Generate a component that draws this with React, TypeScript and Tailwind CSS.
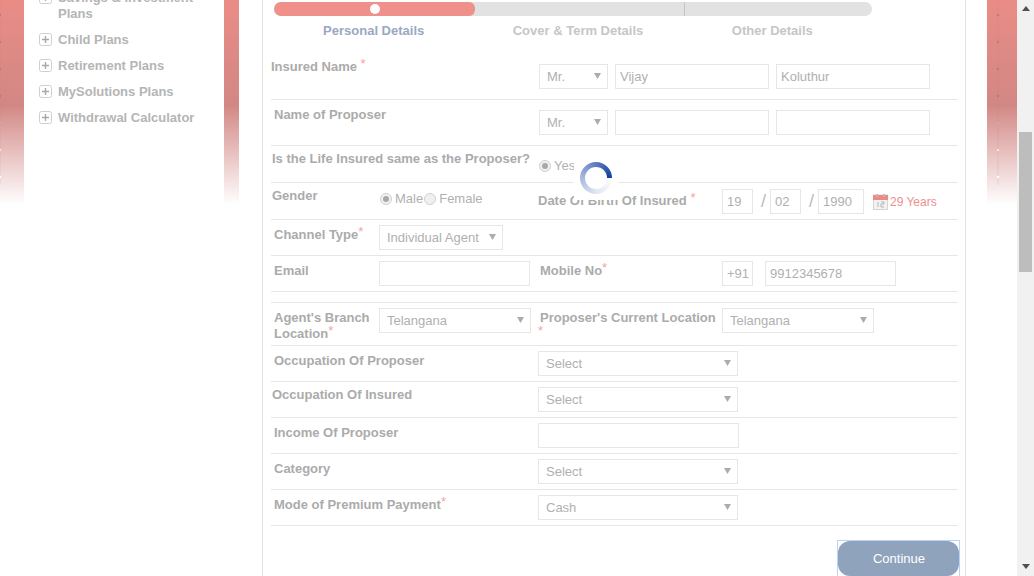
import type { ReactNode } from 'react';

const pink = 'bg-[linear-gradient(#ea8c86_0px,#d28784_105px,#fff_205px)]';
const grid = 'grid grid-cols-[108px_159px_184px_1fr] border-b border-[#e6e6e6] text-[13px]';
const field = 'h-[25px] border border-[#e6e6e6] bg-white px-1 text-[13px] text-[#b0b0b0] outline-none';

const dots = [15, 42, 69, 96, 123, 150, 177];
const dotColors = ['#b07f7c', '#b07f7c', '#ae7f7c', '#ae7f7c', '#cfa9a6', '#f5e4e3', '#ffffff'];

function StripDots({ x }: { x: number }) {
    return (
        <svg className="absolute left-0 top-0" width="30" height="205">
            <line x1={x} y1="0" x2={x} y2="185" stroke="#b98583" strokeOpacity="0.2" />
            {dots.map((y, i) => (
                <circle key={y} cx={x} cy={y} r="1.2" fill={dotColors[i]} />
            ))}
        </svg>
    );
}

function Star() {
    return <span className="relative -top-[3px] inline-block h-3 text-[13px] leading-3 font-normal text-[#f5a3a3]">*</span>;
}

function Label({ children, className = '' }: { children: ReactNode; className?: string }) {
    return <div className={'font-bold leading-4 text-[#ababab] ' + className}>{children}</div>;
}

function Select({ value, className = '' }: { value: string; className?: string }) {
    return (
        <div className={'relative ' + className}>
            <select
                defaultValue={value}
                className="h-[25px] w-full appearance-none border border-[#e6e6e6] bg-white pl-[7px] text-[13px] text-[#b0b0b0] outline-none"
            >
                <option>{value}</option>
            </select>
            <svg className="absolute right-[7px] top-[9px]" width="7" height="6" viewBox="0 0 7 6">
                <path d="M0 0h7L3.5 6z" fill="#acacac" />
            </svg>
        </div>
    );
}

function Radio({ checked, label }: { checked?: boolean; label: string }) {
    return (
        <span className="flex items-center gap-[3px] text-[13px] text-[#b0b0b0]">
            <span className="flex h-3 w-3 items-center justify-center rounded-full border border-[#d0d0d0] bg-[#f0f0f0]">
                {checked && <span className="h-1.5 w-1.5 rounded-full bg-[#a8a8a8]" />}
            </span>
            {label}
        </span>
    );
}

function Plus() {
    return (
        <svg width="13" height="13" viewBox="0 0 13 13" className="shrink-0">
            <rect x="0.5" y="0.5" width="12" height="12" rx="2" fill="#fff" stroke="#cfcfcf" />
            <path d="M3 6.5h7M6.5 3v7" stroke="#a8a8a8" strokeWidth="1.4" />
        </svg>
    );
}

function MenuItem({ children }: { children: ReactNode }) {
    return (
        <div className="flex items-start gap-[6px] pl-[15px] text-[13px] leading-4 font-bold text-[#b5b5b5]">
            <span className="pt-[2px]"><Plus /></span>
            <span className="mt-px">{children}</span>
        </div>
    );
}

function Calendar() {
    return (
        <svg width="15" height="16" viewBox="0 0 15 16" className="shrink-0">
            <rect x="0.5" y="1" width="14" height="14.5" fill="#f2f2f2" stroke="#d5d5d5" />
            <rect x="0" y="1" width="15" height="5" fill="#ee8a86" />
            <rect x="3" y="0" width="2" height="3" fill="#bbb" />
            <rect x="10" y="0" width="2" height="3" fill="#bbb" />
            <path d="M5 8v5M8 8h3v2H8v3h3" stroke="#b5b5b5" fill="none" />
        </svg>
    );
}

export default function App() {
    return (
        <div className="flex h-[576px] w-[1034px] overflow-hidden bg-white font-['Liberation_Sans',Arial,sans-serif]">
            {/* left strip + menu */}
            <div className={'relative h-full w-[239px] shrink-0 pl-6 pr-[15px] ' + pink}>
                <StripDots x={0} />
                <div className="relative flex h-full w-[200px] flex-col gap-[9px] bg-white pt-0">
                    <div className="-mt-[11px]">
                        <MenuItem>Savings &amp; Investment<br />Plans</MenuItem>
                    </div>
                    <MenuItem>Child Plans</MenuItem>
                    <MenuItem>Retirement Plans</MenuItem>
                    <MenuItem>MySolutions Plans</MenuItem>
                    <MenuItem>Withdrawal Calculator</MenuItem>
                </div>
            </div>

            <div className="w-[23px] shrink-0" />

            {/* main form */}
            <div className="relative h-full w-[704px] shrink-0 overflow-hidden border-x border-[#e3e3e3] pl-2 pr-[7px] pt-0.5">
                <div className="ml-[3px] flex h-3.5 w-[598px] overflow-hidden rounded-[7px] bg-[#e2e2e2]">
                    <div className="flex h-full w-[201px] items-center justify-center rounded-r-[6px] bg-[#ef908b]">
                        <span className="h-[10px] w-[10px] rounded-full bg-white" />
                    </div>
                    <div className="ml-[209px] h-full w-px bg-[#c4c4c4]" />
                </div>
                <div className="ml-[3px] mt-[7px] mb-[15px] grid w-[598px] grid-cols-3 text-center text-[13px] leading-4 font-bold text-[#c6c6c6]">
                    <span className="text-[#9aa8c2]">Personal Details</span>
                    <span className="pl-[10px]">Cover &amp; Term Details</span>
                    <span>Other Details</span>
                </div>

                <div className={grid + ' h-[46px]'}>
                    <Label className="col-span-2 pt-[5px]">Insured Name <Star /></Label>
                    <div className="col-span-2 flex gap-[7px] pl-px pt-2.5">
                        <Select value="Mr." className="w-[69px]" />
                        <input className={field + ' w-[154px]'} defaultValue="Vijay" />
                        <input className={field + ' w-[154px]'} defaultValue="Koluthur" />
                    </div>
                </div>
                <div className={grid + ' h-[46px]'}>
                    <Label className="col-span-2 pl-[3px] pt-[7px]">Name of Proposer</Label>
                    <div className="col-span-2 flex gap-[7px] pl-px pt-2.5">
                        <Select value="Mr." className="w-[69px]" />
                        <input className={field + ' w-[154px]'} />
                        <input className={field + ' w-[154px]'} />
                    </div>
                </div>
                <div className={grid + ' h-[37px]'}>
                    <Label className="col-span-2 pl-px pt-[5px]">Is the Life Insured same as the Proposer?</Label>
                    <div className="col-span-2 pl-px pt-2.5"><Radio checked label="Yes" /></div>
                </div>
                <div className={grid + ' h-[37px]'}>
                    <Label className="pl-px pt-[5px]">Gender</Label>
                    <div className="flex items-start gap-px pl-px pt-1.5">
                        <Radio checked label="Male" />
                        <Radio label="Female" />
                    </div>
                    <Label className="pt-2.5">Date Of Birth Of Insured <Star /></Label>
                    <div className="flex items-start pt-1.5 text-[#bcbcbc]">
                        <input className={field + ' w-[31px]'} defaultValue="19" />
                        <span className="w-[17px] pl-1 text-center text-lg leading-6">/</span>
                        <input className={field + ' w-[31px]'} defaultValue="02" />
                        <span className="w-[17px] pl-1 text-center text-lg leading-6">/</span>
                        <input className={field + ' w-[46px]'} defaultValue="1990" />
                        <span className="ml-[9px] mt-[5px]"><Calendar /></span>
                        <span className="ml-0.5 mt-1.5 text-xs leading-[14px] text-[#ef8e8e]">29 Years</span>
                    </div>
                </div>
                <div className={grid + ' h-9'}>
                    <Label className="pl-[3px] pt-[7px]">Channel Type<Star /></Label>
                    <div className="col-span-3 pt-[5px]"><Select value="Individual Agent" className="w-[124px]" /></div>
                </div>
                <div className={grid + ' h-9'}>
                    <Label className="pl-[3px] pt-[7px]">Email</Label>
                    <div className="pt-[5px]"><input className={field + ' w-[151px]'} /></div>
                    <Label className="pl-0.5 pt-[7px]">Mobile No<Star /></Label>
                    <div className="flex gap-3 pt-[5px]">
                        <input className={field + ' w-[31px] pr-0'} defaultValue="+91" />
                        <input className={field + ' w-[131px]'} defaultValue="9912345678" />
                    </div>
                </div>
                <div className="h-[11px] border-b border-[#e6e6e6]" />
                <div className={grid + ' h-[43px]'}>
                    <Label className="pl-[3px] pt-[7px]">Agent's Branch Location<Star /></Label>
                    <div className="pt-[5px]"><Select value="Telangana" className="w-[152px]" /></div>
                    <Label className="pt-[7px]">
                        <span className="block pl-0.5">Proposer's Current Location</span>
                        <Star />
                    </Label>
                    <div className="pt-[5px]"><Select value="Telangana" className="w-[152px]" /></div>
                </div>
                <div className={grid + ' h-9'}>
                    <Label className="col-span-2 pl-[3px] pt-[7px]">Occupation Of Proposer</Label>
                    <div className="col-span-2 pt-[5px]"><Select value="Select" className="w-[200px]" /></div>
                </div>
                <div className={grid + ' h-9'}>
                    <Label className="col-span-2 pl-px pt-[5px]">Occupation Of Insured</Label>
                    <div className="col-span-2 pt-[5px]"><Select value="Select" className="w-[200px]" /></div>
                </div>
                <div className={grid + ' h-9'}>
                    <Label className="col-span-2 pl-[3px] pt-[7px]">Income Of Proposer</Label>
                    <div className="col-span-2 pt-[5px]"><input className={field + ' w-[201px]'} /></div>
                </div>
                <div className={grid + ' h-9'}>
                    <Label className="col-span-2 pl-[3px] pt-[7px]">Category</Label>
                    <div className="col-span-2 pt-[5px]"><Select value="Select" className="w-[200px]" /></div>
                </div>
                <div className={grid + ' h-9'}>
                    <Label className="col-span-2 pl-[3px] pt-[7px]">Mode of Premium Payment<Star /></Label>
                    <div className="col-span-2 pt-[5px]"><Select value="Cash" className="w-[200px]" /></div>
                </div>

                <div className="mt-3.5 -mr-0.5 flex justify-end">
                    <div className="border border-[#bcd2fb]">
                        <button className="block h-[35px] w-[121px] rounded-[12px] bg-[#8fa3bd] pl-px text-[13px] text-white">
                            Continue
                        </button>
                    </div>
                </div>

                {/* loading spinner over the form */}
                <div className="absolute left-[311px] top-[156px] flex h-11 w-11 items-center justify-center bg-white">
                    <div className="flex h-8 w-8 items-center justify-center rounded-full bg-[conic-gradient(from_90deg,#ffffff,#dfe5f3_25%,#a9b9de_50%,#6c88c6_70%,#0f3f9f_100%)]">
                        <div className="h-[22px] w-[22px] rounded-full bg-white" />
                    </div>
                </div>
            </div>

            <div className="w-[21px] shrink-0" />

            {/* right strip */}
            <div className={'relative h-full w-[30px] shrink-0 ' + pink}>
                <StripDots x={11} />
            </div>

            {/* scrollbar */}
            <div className="flex h-full w-[17px] shrink-0 flex-col items-center bg-[#f1f1f1]">
                <svg className="mt-[6px] shrink-0" width="8" height="5" viewBox="0 0 8 5">
                    <path d="M0 5L4 0l4 5z" fill="#505050" />
                </svg>
                <div className="mt-[121px] h-[140px] w-[13px] shrink-0 bg-[#bdbdbd]" />
                <svg className="mt-auto mb-[7px] shrink-0" width="8" height="5" viewBox="0 0 8 5">
                    <path d="M0 0l4 5 4-5z" fill="#505050" />
                </svg>
            </div>
        </div>
    );
}
